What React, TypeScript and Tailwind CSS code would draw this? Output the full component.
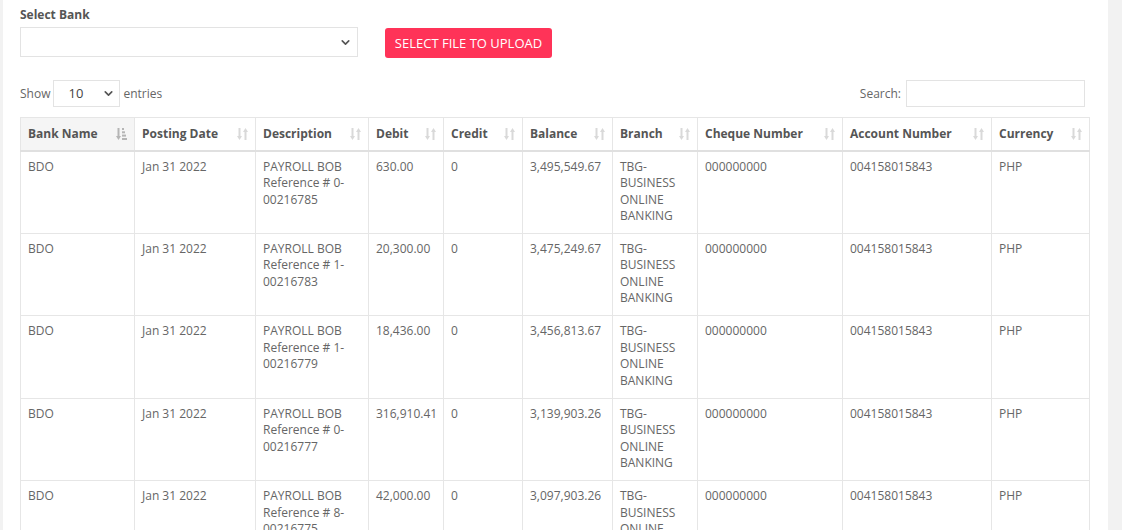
import { ChevronDown } from 'lucide-react'

const columns = [
  { label: 'Bank Name', w: 'w-[114px]' },
  { label: 'Posting Date', w: 'w-[121px]' },
  { label: 'Description', w: 'w-[113px]' },
  { label: 'Debit', w: 'w-[75px]' },
  { label: 'Credit', w: 'w-[79px]' },
  { label: 'Balance', w: 'w-[90px]' },
  { label: 'Branch', w: 'w-[85px]' },
  { label: 'Cheque Number', w: 'w-[145px]' },
  { label: 'Account Number', w: 'w-[149px]' },
  { label: 'Currency', w: 'w-[98px]' },
]

const rows = [
  { ref: '0-00216785', debit: '630.00', balance: '3,495,549.67' },
  { ref: '1-00216783', debit: '20,300.00', balance: '3,475,249.67' },
  { ref: '1-00216779', debit: '18,436.00', balance: '3,456,813.67' },
  { ref: '0-00216777', debit: '316,910.41', balance: '3,139,903.26' },
  { ref: '8-00216775', debit: '42,000.00', balance: '3,097,903.26' },
]

function SortBoth() {
  return (
    <svg width="11" height="12" viewBox="0 0 11 12" className="text-[#d9d9d9]" fill="currentColor">
      <rect x="1.5" y="0" width="2" height="9" />
      <path d="M0 8h5l-2.5 4z" />
      <rect x="7.5" y="3" width="2" height="9" />
      <path d="M6 4h5L8.5 0z" />
    </svg>
  )
}

function SortAsc() {
  return (
    <svg width="11" height="12" viewBox="0 0 11 12" className="text-[#b5b5b5]" fill="currentColor">
      <rect x="1.5" y="0" width="2" height="9" />
      <path d="M0 8h5l-2.5 4z" />
      <rect x="6" y="0" width="2" height="2" />
      <rect x="6" y="3.3" width="3" height="2" />
      <rect x="6" y="6.6" width="4" height="2" />
      <rect x="6" y="10" width="5" height="2" />
    </svg>
  )
}

const cell = 'border border-[#e6e6e6] px-[7px] pt-[7px] pb-[8.4px]'

export default function App() {
  return (
    <div className="w-[1122px] h-[530px] overflow-hidden bg-[#f2f2f2] flex font-['Open_Sans',sans-serif] text-[12px] text-[#666]">
      <div className="ml-[3px] w-[1105px] bg-white pl-[17px] pt-[7px]">
        <div className="font-bold text-[#555] leading-[16px]">Select Bank</div>
        <div className="flex items-start mt-[4px]">
          <div className="w-[338px] h-[30px] border border-[#e3e3e3] flex items-center justify-end pr-[5px]">
            <ChevronDown size={13} strokeWidth={3} className="text-[#555]" />
          </div>
          <button className="ml-[27px] mt-[1px] h-[30px] w-[167px] rounded-[3px] bg-[#ff3358] text-white text-[13px] leading-none">
            SELECT FILE TO UPLOAD
          </button>
        </div>

        <div className="flex items-center justify-between mt-[22px] w-[1065px]">
          <div className="flex items-center gap-[3px]">
            <span>Show</span>
            <div className="w-[67px] h-[27px] border border-[#e3e3e3] flex items-center justify-between pl-[14px] pr-[4px] text-[13px] text-[#444]">
              <span>10</span>
              <ChevronDown size={13} strokeWidth={3} className="text-[#555]" />
            </div>
            <span>entries</span>
          </div>
          <div className="flex items-center gap-[5px]">
            <span>Search:</span>
            <div className="w-[179px] h-[27px] border border-[#e3e3e3]" />
          </div>
        </div>

        <table className="mt-[10px] border-collapse table-fixed w-[1070px]">
          <thead>
            <tr>
              {columns.map((c, i) => (
                <th
                  key={c.label}
                  className={`${c.w} h-[33px] border border-[#e6e6e6] border-b-2 border-b-[#e0e0e0] px-[7px] text-left font-bold text-[#555] ${
                    i === 0 ? 'bg-[#f5f5f5]' : 'bg-white'
                  }`}
                >
                  <div className="flex items-center justify-between">
                    <span>{c.label}</span>
                    {i === 0 ? <SortAsc /> : <SortBoth />}
                  </div>
                </th>
              ))}
            </tr>
          </thead>
          <tbody>
            {rows.map((r) => (
              <tr key={r.ref} className="align-top leading-[16.5px]">
                <td className={cell}>BDO</td>
                <td className={cell}>Jan 31 2022</td>
                <td className={cell}>PAYROLL BOB Reference # {r.ref}</td>
                <td className={cell}>{r.debit}</td>
                <td className={cell}>0</td>
                <td className={cell}>{r.balance}</td>
                <td className={cell}>TBG-BUSINESS ONLINE BANKING</td>
                <td className={cell}>000000000</td>
                <td className={cell}>004158015843</td>
                <td className={cell}>PHP</td>
              </tr>
            ))}
          </tbody>
        </table>
      </div>
    </div>
  )
}
